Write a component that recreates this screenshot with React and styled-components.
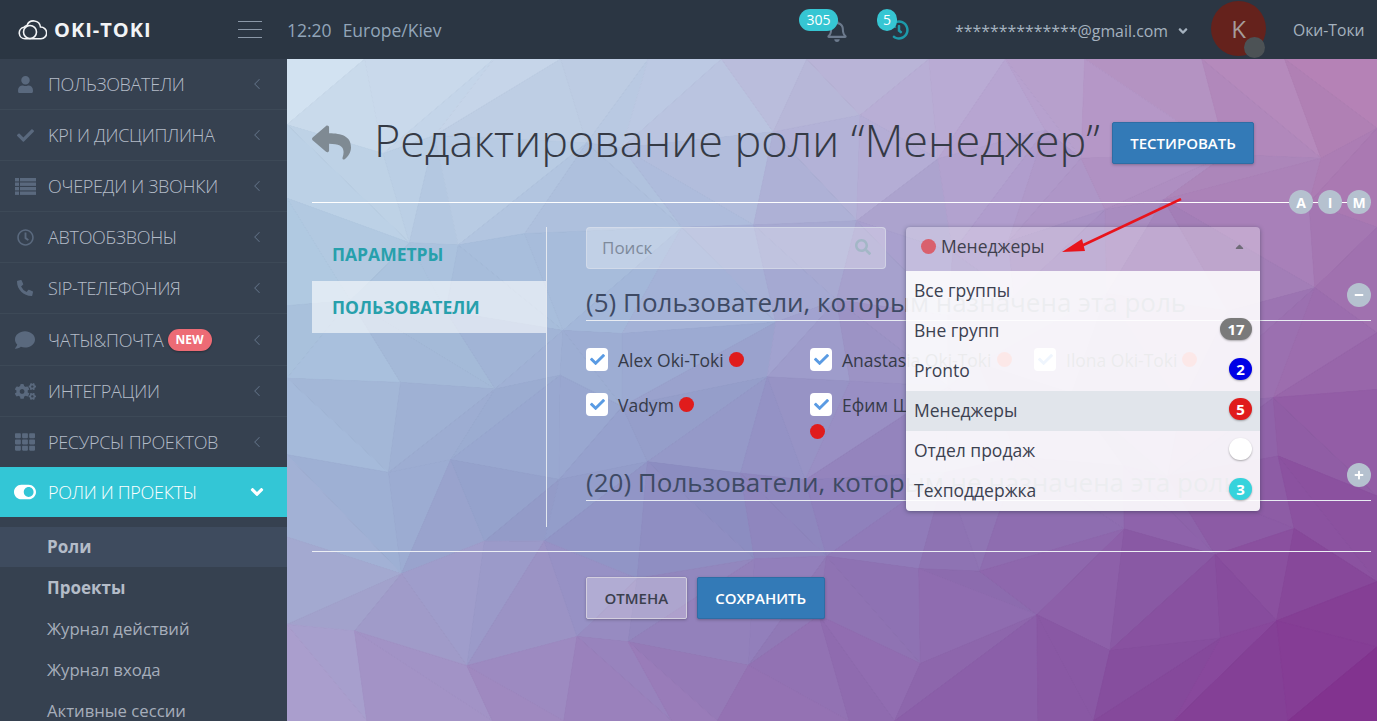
import styled, { createGlobalStyle } from 'styled-components';
import { ChevronLeft } from 'lucide-react';
import {
	FaUser,
	FaCheck,
	FaRegClock,
	FaPhoneAlt,
	FaComment,
	FaCogs,
	FaTh,
	FaToggleOn,
	FaReply,
	FaSearch,
	FaAngleDown,
	FaRegBell,
	FaHistory,
	FaMinus,
	FaPlus,
	FaCaretUp,
} from 'react-icons/fa';

const GlobalStyle = createGlobalStyle`
	html, body { margin: 0; padding: 0; height: 100%; overflow: hidden; }
	body { font-family: "Open Sans", "Liberation Sans", sans-serif; background: #2b3643; }
	* { box-sizing: border-box; }
`;

const Page = styled.div`
	display: flex;
	flex-direction: column;
	height: 100vh;
	overflow: hidden;
`;

const Header = styled.header`
	display: flex;
	align-items: center;
	flex: 0 0 59px;
	background: #2b3643;
	color: #a2b1c2;
	position: relative;
	z-index: 2;
`;

const Logo = styled.div`
	display: flex;
	align-items: center;
	gap: 7px;
	width: 238px;
	padding-left: 18px;
	color: #f2f4f6;
	font-size: 20px;
	font-weight: 700;
	letter-spacing: 1px;
`;

const Burger = styled.div`
	display: flex;
	flex-direction: column;
	gap: 7px;
	width: 24px;
	margin-right: 25px;
	span {
		display: block;
		height: 1px;
		background: #8b98a8;
	}
`;

const Clock = styled.div`
	display: flex;
	gap: 11px;
	font-size: 17.5px;
	color: #92a5b9;
	width: 512px;
`;

const Notify = styled.div`
	position: relative;
	width: ${(p) => p.$w}px;
	height: 59px;
	color: ${(p) => p.$color};
	font-size: ${(p) => p.$size}px;
	svg {
		position: absolute;
		top: 20px;
		left: ${(p) => p.$iconLeft}px;
	}
`;

const Badge = styled.span`
	position: absolute;
	top: 9px;
	left: ${(p) => p.$left}px;
	height: 22px;
	min-width: ${(p) => p.$w}px;
	border-radius: 11px;
	background: #36c6d3;
	color: #fff;
	font-size: 14px;
	line-height: 21px;
	text-align: center;
	z-index: 1;
`;

const Email = styled.div`
	display: flex;
	align-items: center;
	gap: 8px;
	width: 256px;
	margin-left: 2px;
	font-size: 15.9px;
	color: #a5b2bf;
	padding-top: 2px;
	white-space: nowrap;
`;

const Avatar = styled.div`
	position: relative;
	width: 55px;
	height: 55px;
	margin: -3px 27px 0 0;
	border-radius: 50%;
	background: #65221c;
	color: #a59c9a;
	font-size: 24px;
	line-height: 55px;
	text-align: center;
	&::after {
		content: '';
		position: absolute;
		right: 1px;
		bottom: -2px;
		width: 21px;
		height: 21px;
		border-radius: 50%;
		background: #4c5255;
	}
`;

const Company = styled.div`
	font-size: 15.7px;
	color: #a5b2bf;
	white-space: nowrap;
`;

const Body = styled.div`
	display: flex;
	flex: 1;
	min-height: 0;
`;

const Sidebar = styled.nav`
	flex: 0 0 287px;
	background: #364150;
	overflow: hidden;
`;

const MenuItem = styled.div`
	display: flex;
	align-items: center;
	height: ${(p) => (p.$active ? 50 : p.$tall ? 52 : 51)}px;
	padding-left: 14px;
	font-weight: 300;
	font-size: 18px;
	letter-spacing: -0.3px;
	color: ${(p) => (p.$active ? '#fff' : '#b4bcc8')};
	background: ${(p) => (p.$active ? '#33c6d6' : 'transparent')};
	border-top: ${(p) => (p.$active ? 'none' : '1px solid #3d4957')};
	&:first-child { height: 50px; border-top: none; }
`;

const MenuIcon = styled.span`
	display: flex;
	justify-content: center;
	width: 22px;
	margin-right: 12px;
	color: ${(p) => (p.$active ? '#fff' : '#5a697e')};
	font-size: ${(p) => p.$size || 18}px;
`;

const MenuLabel = styled.span`
	flex: 1;
	display: flex;
	align-items: center;
	gap: 4px;
`;

const NewTag = styled.span`
	height: 22px;
	padding: 0 8px;
	border-radius: 11px;
	background: #ed6b75;
	color: #fff;
	font-size: 12px;
	letter-spacing: 0;
	font-weight: 700;
	line-height: 21px;
	box-shadow: 0 1px 2px rgba(0, 0, 0, 0.3);
`;

const Chevron = styled.span`
	display: flex;
	width: 18px;
	margin-right: 21px;
	justify-content: center;
	color: ${(p) => (p.$active ? '#fff' : '#5f6f84')};
	font-size: 20px;
`;

const SubMenu = styled.div`
	padding-top: 10px;
`;

const SubItem = styled.div`
	height: ${(p) => (p.$current ? 40 : 41)}px;
	padding-left: 47px;
	font-size: ${(p) => (p.$bold ? 17 : 16.7)}px;
	line-height: ${(p) => (p.$current ? 40 : 42)}px;
	font-weight: ${(p) => (p.$bold ? 700 : 400)};
	color: ${(p) => (p.$bold ? '#b4bcc8' : '#a6aebb')};
	background: ${(p) => (p.$current ? '#3e4b5e' : 'transparent')};
`;

const Main = styled.main`
	position: relative;
	flex: 1;
	min-width: 0;
	padding: 0 6px 0 25px;
	overflow: hidden;
`;

const Mesh = styled.svg`
	position: absolute;
	inset: 0;
	width: 100%;
	height: 100%;
`;

const Content = styled.div`
	position: relative;
`;

const TitleRow = styled.div`
	display: flex;
	align-items: center;
	height: 144px;
	padding-top: 19px;
	border-bottom: 1px solid #fff;
`;

const BackIcon = styled(FaReply)`
	color: #7f8a93;
	font-size: 39px;
	margin: 5px 23px 0 0;
`;

const Title = styled.h1`
	margin: 0 12px 0 0;
	font-size: 45px;
	font-weight: 300;
	line-height: 60px;
	color: #353a45;
	white-space: nowrap;
`;

const Button = styled.button`
	height: 42px;
	margin-top: ${(p) => p.$top || 0}px;
	padding: 0 17.5px;
	border-radius: 2px;
	border: 1px solid ${(p) => (p.$plain ? '#d3cede' : '#2e6da4')};
	background: ${(p) => (p.$plain ? 'rgba(255,255,255,0.25)' : '#337ab7')};
	color: ${(p) => (p.$plain ? '#3b3f4d' : '#fff')};
	font-family: inherit;
	font-size: 15px;
	font-weight: 600;
	box-shadow: 0 1px 3px rgba(0, 0, 0, 0.25);
`;

const Columns = styled.div`
	display: flex;
	margin-top: 24px;
	height: 300px;
`;

const Tabs = styled.div`
	flex: 0 0 235px;
	padding-top: 1px;
	border-right: 1px solid #e4e8ef;
`;

const Tab = styled.div`
	height: ${(p) => (p.$active ? 52 : 53)}px;
	padding-left: 20px;
	font-size: 17.5px;
	font-weight: 700;
	line-height: 52px;
	color: #27a0ac;
	background: ${(p) => (p.$active ? 'rgba(255,255,255,0.6)' : 'transparent')};
`;

const Panel = styled.div`
	position: relative;
	flex: 1;
	padding-left: 39px;
`;

const Filters = styled.div`
	display: flex;
	gap: 20px;
	height: 42px;
`;

const Search = styled.div`
	display: flex;
	align-items: center;
	justify-content: space-between;
	width: 300px;
	padding: 0 14px 2px 15px;
	border: 1px solid rgba(220, 225, 235, 0.6);
	border-radius: 4px;
	background: rgba(255, 255, 255, 0.3);
	color: #7e8a9b;
	font-size: 17px;
	svg { color: #a3b7c6; font-size: 16px; }
`;

const Dropdown = styled.div`
	position: absolute;
	top: 0;
	left: 359px;
	width: 354px;
	z-index: 1;
	border-radius: 4px;
	box-shadow: 0 1px 4px rgba(40, 50, 70, 0.5);
	overflow: hidden;
`;

const Trigger = styled.div`
	display: flex;
	align-items: center;
	height: 44px;
	padding: 0 14px 6px 15px;
	background: rgba(255, 255, 255, 0.3);
	color: #3f3f4d;
	font-size: 17.5px;
	svg { margin-left: auto; color: #6f6b78; font-size: 13px; }
`;

const TriggerDot = styled.i`
	width: 15px;
	height: 15px;
	margin-right: 5px;
	border-radius: 50%;
	background: #d9606d;
`;

const Options = styled.div`
	background: rgba(255, 255, 255, 0.9);
`;

const Option = styled.div`
	display: flex;
	align-items: center;
	justify-content: space-between;
	height: 40px;
	padding: 0 8px 2px 8px;
	color: #3c4150;
	font-size: 17.5px;
	background: ${(p) => (p.$selected ? '#e1e5eb' : 'transparent')};
`;

const Count = styled.span`
	min-width: ${(p) => p.$w || 23}px;
	height: 22px;
	margin-top: -2px;
	border-radius: 11px;
	background: ${(p) => p.$bg};
	color: #fff;
	font-size: 15px;
	font-weight: 700;
	line-height: 22px;
	text-align: center;
	box-shadow: 0 1px 2px rgba(0, 0, 0, 0.3);
`;

const SectionHead = styled.div`
	position: relative;
	height: 34px;
	margin-top: 18px;
	font-size: 26px;
	line-height: 30px;
	color: #3e4a64;
	white-space: nowrap;
	border-bottom: 1px solid #e8ecf2;
`;

const RoundBtn = styled.span`
	position: absolute;
	right: 0;
	top: -4px;
	display: flex;
	align-items: center;
	justify-content: center;
	width: 24px;
	height: 24px;
	border-radius: 50%;
	background: #b5c1cf;
	color: #fff;
	font-size: ${(p) => p.$size || 12}px;
	font-weight: 700;
`;

const AimGroup = styled.div`
	position: absolute;
	top: 131px;
	right: 0;
	display: flex;
	gap: 5px;
	${RoundBtn} { position: static; }
`;

const Users = styled.div`
	display: grid;
	grid-template-columns: repeat(3, 224px);
	grid-auto-rows: 45px;
	margin-top: 27px;
	height: 101px;
`;

const User = styled.div`
	display: flex;
	align-items: flex-start;
	flex-wrap: wrap;
	width: ${(p) => p.$w || 215}px;
	color: #353a48;
	font-size: 17.5px;
	line-height: 24px;
`;

const Check = styled.span`
	display: flex;
	align-items: center;
	justify-content: center;
	width: 22px;
	height: 23px;
	margin-right: 10px;
	border-radius: 4px;
	background: #fff;
	color: #5a9be3;
	font-size: 15px;
`;

const Dot = styled.i`
	width: 15px;
	height: 15px;
	margin: 4px 0 0 5px;
	border-radius: 50%;
	background: #e01c1c;
`;

const WrappedDot = styled(Dot)`
	margin: 7px 0 0 0;
`;

const Footer = styled.div`
	display: flex;
	gap: 10px;
	margin-top: 24px;
	padding: 25px 0 0 274px;
	border-top: 1px solid #eceff4;
`;

const Arrow = styled.svg`
	position: absolute;
	left: 749px;
	top: 139px;
	z-index: 2;
`;

// полигональный фон: цвет берём из сетки опорных точек
const palette = [
	['#d6e5f2', '#bfcde4', '#bca9d3', '#b57fb2'],
	['#aec8e0', '#a3b7d9', '#a894c7', '#a070ae'],
	['#a2b6d7', '#8d94c5', '#8f72b3', '#8a4e9d'],
	['#ab9bcb', '#9a7ab8', '#8a5aa6', '#7f2a8a'],
];

const hex = (c) => [1, 3, 5].map((i) => parseInt(c.slice(i, i + 2), 16));

const colorAt = (x, y, shift) => {
	const u = Math.min(Math.max(x / 1090, 0), 0.999) * 3;
	const v = Math.min(Math.max(y / 662, 0), 0.999) * 3;
	const i = Math.floor(u);
	const j = Math.floor(v);
	const a = hex(palette[j][i]);
	const b = hex(palette[j][i + 1]);
	const c = hex(palette[j + 1][i]);
	const d = hex(palette[j + 1][i + 1]);
	const fx = u - i;
	const fy = v - j;
	const rgb = a.map((_, k) => {
		const top = a[k] + (b[k] - a[k]) * fx;
		const bottom = c[k] + (d[k] - c[k]) * fx;
		return Math.round(top + (bottom - top) * fy + shift);
	});
	return `rgb(${rgb.join(',')})`;
};

const buildMesh = () => {
	let seed = 11;
	const rnd = () => {
		seed = (seed * 16807) % 2147483647;
		return seed / 2147483647;
	};
	const cols = 12;
	const rows = 8;
	const pts = [];
	for (let r = 0; r <= rows; r++) {
		const line = [];
		for (let c = 0; c <= cols; c++) {
			line.push([
				(c / cols) * 1090 + (rnd() - 0.5) * 70 * (c > 0 && c < cols ? 1 : 0),
				(r / rows) * 662 + (rnd() - 0.5) * 55 * (r > 0 && r < rows ? 1 : 0),
			]);
		}
		pts.push(line);
	}
	const tris = [];
	for (let r = 0; r < rows; r++) {
		for (let c = 0; c < cols; c++) {
			const [p, q, s, t] = [pts[r][c], pts[r][c + 1], pts[r + 1][c], pts[r + 1][c + 1]];
			const pair = rnd() > 0.5 ? [[p, q, s], [q, t, s]] : [[p, q, t], [p, t, s]];
			pair.forEach((tri) => {
				const cx = (tri[0][0] + tri[1][0] + tri[2][0]) / 3;
				const cy = (tri[0][1] + tri[1][1] + tri[2][1]) / 3;
				tris.push({
					points: tri.map((o) => o.join(',')).join(' '),
					fill: colorAt(cx, cy, (rnd() - 0.5) * 3.5),
				});
			});
		}
	}
	return tris;
};

const meshTriangles = buildMesh();

const ListIcon = () => (
	<svg width="21" height="17" viewBox="0 0 21 17" fill="currentColor">
		<rect y="0" width="4" height="3.400" />
		<rect x="5" y="0" width="16" height="3.400" />
		<rect y="4.500" width="4" height="3.400" />
		<rect x="5" y="4.500" width="16" height="3.400" />
		<rect y="9" width="4" height="3.400" />
		<rect x="5" y="9" width="16" height="3.400" />
		<rect y="13.500" width="4" height="3.400" />
		<rect x="5" y="13.500" width="16" height="3.400" />
	</svg>
);

const menu = [
	{ label: 'ПОЛЬЗОВАТЕЛИ', Icon: FaUser, size: 17 },
	{ label: 'KPI И ДИСЦИПЛИНА', Icon: FaCheck, size: 17 },
	{ label: 'ОЧЕРЕДИ И ЗВОНКИ', Icon: ListIcon, size: 20 },
	{ label: 'АВТООБЗВОНЫ', Icon: FaRegClock, size: 17 },
	{ label: 'SIP-ТЕЛЕФОНИЯ', Icon: FaPhoneAlt, size: 16 },
	{ label: 'ЧАТЫ&ПОЧТА', Icon: FaComment, size: 20, isNew: true },
	{ label: 'ИНТЕГРАЦИИ', Icon: FaCogs, size: 21 },
	{ label: 'РЕСУРСЫ ПРОЕКТОВ', Icon: FaTh, size: 20 },
];

const groups = [
	{ name: 'Все группы' },
	{ name: 'Вне групп', count: 17, bg: '#7a7a7a', w: 32 },
	{ name: 'Pronto', count: 2, bg: '#0000e6' },
	{ name: 'Менеджеры', count: 5, bg: '#e01c1c', selected: true },
	{ name: 'Отдел продаж', count: '', bg: '#ffffff' },
	{ name: 'Техподдержка', count: 3, bg: '#36d3dc' },
];

const CloudLogo = () => (
	<svg width="29" height="21" viewBox="0 0 29 21" fill="none" stroke="#f2f4f6" strokeWidth="1.600">
		<path d="M9 6.500a7 7 0 0 1 13.500 1.500a5.800 5.800 0 0 1 0.500 11.800H7a5.800 5.800 0 0 1 -1 -11.500a5 5 0 0 1 3 -1.800z" />
		<circle cx="12" cy="13" r="6.500" />
	</svg>
);

const App = () => {
	return (
		<Page>
			<GlobalStyle />
			<Header>
				<Logo>
					<CloudLogo />
					OKI-TOKI
				</Logo>
				<Burger>
					<span />
					<span />
					<span />
				</Burger>
				<Clock>
					<span>12:20</span>
					<span>Europe/Kiev</span>
				</Clock>
				<Notify $w={78} $size={22} $color="#6c7a8d" $iconLeft={27}>
					<Badge $left={0} $w={39}>305</Badge>
					<FaRegBell />
				</Notify>
				<Notify $w={76} $size={20} $color="#1d9aaa" $iconLeft={12}>
					<Badge $left={0} $w={20}>5</Badge>
					<FaHistory />
				</Notify>
				<Email>
					**************@gmail.com
					<FaAngleDown size={14} />
				</Email>
				<Avatar>K</Avatar>
				<Company>Оки-Токи</Company>
			</Header>
			<Body>
				<Sidebar>
					{menu.map(({ label, Icon, size, isNew }) => (
						<MenuItem key={label} $tall={isNew}>
							<MenuIcon $size={size}>
								<Icon />
							</MenuIcon>
							<MenuLabel>
								{label}
								{isNew && <NewTag>NEW</NewTag>}
							</MenuLabel>
							<Chevron>
								<ChevronLeft size={18} strokeWidth={1.4} />
							</Chevron>
						</MenuItem>
					))}
					<MenuItem $active>
						<MenuIcon $active $size={26}>
							<FaToggleOn />
						</MenuIcon>
						<MenuLabel>РОЛИ И ПРОЕКТЫ</MenuLabel>
						<Chevron $active>
							<FaAngleDown />
						</Chevron>
					</MenuItem>
					<SubMenu>
						<SubItem $current $bold>Роли</SubItem>
						<SubItem $bold>Проекты</SubItem>
						<SubItem>Журнал действий</SubItem>
						<SubItem>Журнал входа</SubItem>
						<SubItem>Активные сессии</SubItem>
					</SubMenu>
				</Sidebar>
				<Main>
					<Mesh viewBox="0 0 1090 662" preserveAspectRatio="none">
						{meshTriangles.map((t) => (
							<polygon key={t.points} points={t.points} fill={t.fill} stroke={t.fill} />
						))}
					</Mesh>
					<Content>
						<TitleRow>
							<BackIcon />
							<Title>Редактирование роли “Менеджер”</Title>
							<Button $top={5}>ТЕСТИРОВАТЬ</Button>
						</TitleRow>
						<AimGroup>
							<RoundBtn $size={14}>A</RoundBtn>
							<RoundBtn $size={14}>I</RoundBtn>
							<RoundBtn $size={14}>M</RoundBtn>
						</AimGroup>
						<Arrow width="130" height="60" viewBox="0 0 130 60">
							<path d="M120 1 L16 50" stroke="#e8141c" strokeWidth="2.500" />
							<path d="M1 54 L21 41 L24 53 Z" fill="#e8141c" />
						</Arrow>
						<Columns>
							<Tabs>
								<Tab>ПАРАМЕТРЫ</Tab>
								<Tab $active>ПОЛЬЗОВАТЕЛИ</Tab>
							</Tabs>
							<Panel>
								<Filters>
									<Search>
										Поиск
										<FaSearch />
									</Search>
								</Filters>
								<Dropdown>
									<Trigger>
										<TriggerDot />
										Менеджеры
										<FaCaretUp />
									</Trigger>
									<Options>
										{groups.map((g) => (
											<Option key={g.name} $selected={g.selected}>
												<span>{g.name}</span>
												{g.count !== undefined && (
													<Count $bg={g.bg} $w={g.w}>{g.count}</Count>
												)}
											</Option>
										))}
									</Options>
								</Dropdown>
								<SectionHead>
									(5) Пользователи, которым назначена эта роль
									<RoundBtn><FaMinus size={10} /></RoundBtn>
								</SectionHead>
								<Users>
									<User>
										<Check><FaCheck /></Check>
										Alex Oki-Toki
										<Dot />
									</User>
									<User>
										<Check><FaCheck /></Check>
										Anastasia Oki-Toki
										<Dot />
									</User>
									<User>
										<Check><FaCheck /></Check>
										Ilona Oki-Toki
										<Dot />
									</User>
									<User>
										<Check><FaCheck /></Check>
										Vadym
										<Dot />
									</User>
									<User $w={208}>
										<Check><FaCheck /></Check>
										Ефим Шапошников
										<WrappedDot />
									</User>
								</Users>
								<SectionHead>
									(20) Пользователи, которым не назначена эта роль
									<RoundBtn><FaPlus size={10} /></RoundBtn>
								</SectionHead>
							</Panel>
						</Columns>
						<Footer>
							<Button $plain>ОТМЕНА</Button>
							<Button>СОХРАНИТЬ</Button>
						</Footer>
					</Content>
				</Main>
			</Body>
		</Page>
	);
};

export default App;
